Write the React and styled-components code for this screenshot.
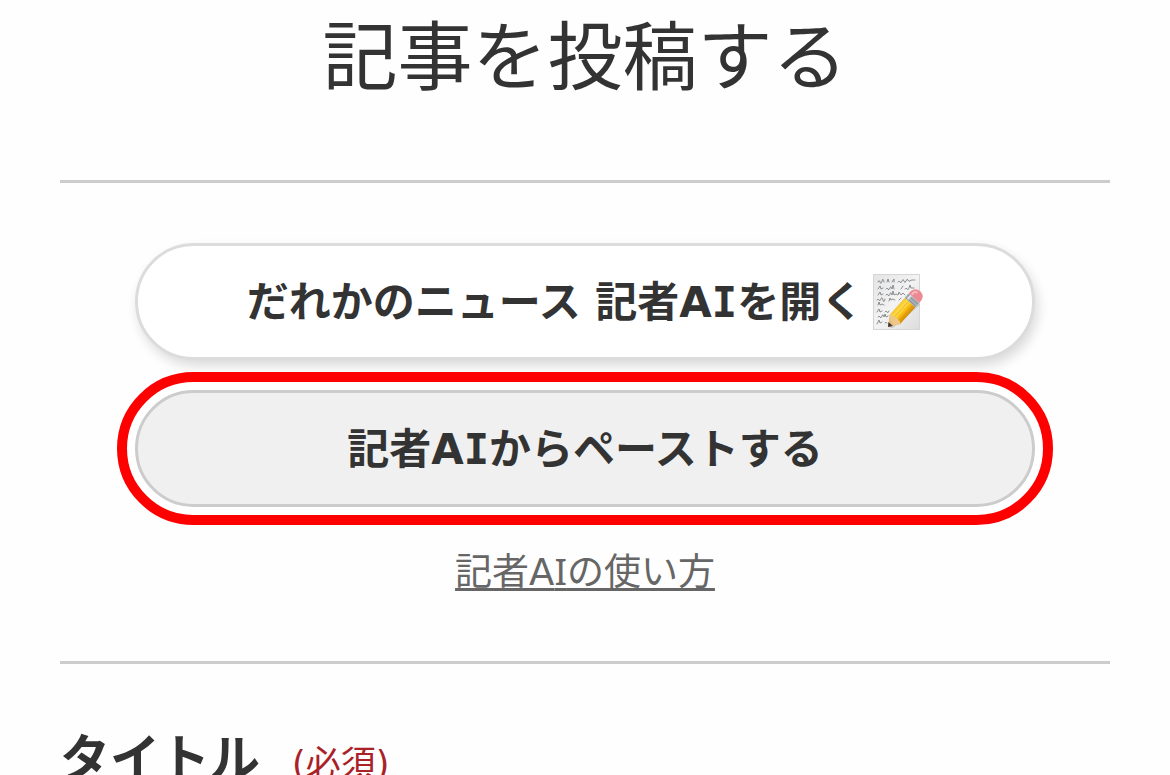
import React from 'react';
import styled, { createGlobalStyle } from 'styled-components';

const colors = {
  text: '#333',
  link: '#666',
  line: '#ccc',
  required: '#a9222a',
  highlight: '#f00',
};

const sizes = {
  title: 75,
  heading: 50,
  button: 42,
  link: 37,
  note: 35,
};

function MemoIcon() {
  return (
    <Memo viewBox="0 0 50 56" aria-hidden="true">
      <defs>
        <linearGradient id="paper" x1="0" y1="0" x2="1" y2="1">
          <stop offset="0" stopColor="#e4e4e4" />
          <stop offset="0.5" stopColor="#f3f3f3" />
          <stop offset="1" stopColor="#dcdcdc" />
        </linearGradient>
        <linearGradient id="barrel" x1="0" y1="0" x2="0" y2="1">
          <stop offset="0" stopColor="#f6c22c" />
          <stop offset="0.35" stopColor="#ffe14d" />
          <stop offset="0.6" stopColor="#f8bd14" />
          <stop offset="1" stopColor="#cf8a08" />
        </linearGradient>
      </defs>
      <rect x="0.5" y="0.5" width="46" height="55" fill="url(#paper)" stroke="#d6d6d6" />
      <g fill="none" stroke="#74777b" strokeWidth="0.8" strokeLinecap="round">
        <path d="M5 8q1-3 2 0t2-1 2 1M14 8l1-3 1 3M19 8l2-3v3M25 8q1-2 2 0t2-1 2 0 2 0 2-1 2 1 2-1 3 0" />
        <path d="M5 15l2-3 1 3 2-1M13 15q1-2 2 0t2-1 2 1l1-4 1 4M28 15l2-3M32 15q1-2 2 0t2-1l1-3 1 3 3 0" />
        <path d="M5 21l2-3 1 3 2-1M13 21q1-2 2 0t2-1 2 1l1-4 1 4 2-1 2 1 1-3 2 3 2-2 2 2M36 21l2-3" />
        <path d="M4 26q1-2 2 0t2-1 2 1 2-1M16 27l1-3 1 2 2-1 2 1M26 26l2-2" />
        <path d="M5 31l1-3 1 3 2-1 2 1M4 38l2-3 1 3 2-1M12 38q1-2 2 0t2-1" />
        <path d="M5 43q1-2 2 0t2-1 2 1l1-3 1 3 2-1M4 50l2-4 1 3 2-1M12 49q1-2 2 0" />
      </g>
      <path d="M16 54L45 28l2 3-27 23z" fill="#777" opacity="0.25" />
      <g transform="translate(15 53) rotate(-48)">
        <path d="M0 0L10-7v14z" fill="#e8bf83" />
        <path d="M0 0l4-3v6z" fill="#3d3932" />
        <path d="M10-7q2 0 2 3 2 0 1 3 2 1 0 4 1 4-3 4L5 3z" fill="#efc887" />
        <path d="M10-7h23v14H10q3-1 2-4 2-2 0-4 1-4-2-6z" fill="url(#barrel)" />
        <path d="M12-2h21M12 4h21" stroke="#d9960b" strokeWidth="0.6" />
        <rect x="33" y="-7" width="6" height="14" fill="#a9b0b6" />
        <path d="M34-7v14M37-7v14" stroke="#7c858d" strokeWidth="0.8" />
        <path d="M34-4h5" stroke="#e3e6e8" strokeWidth="2" />
        <path d="M39-7h3q6 1 6 7t-6 7h-3z" fill="#ec8992" />
        <path d="M40-4h3q2 1 2 3" stroke="#f9b9bd" strokeWidth="2" fill="none" />
      </g>
    </Memo>
  );
}

function App() {
  return (
    <>
      <GlobalStyle />
      <Page>
        <Title>記事を投稿する</Title>
        <Assistant>
          <PillButton type="button">
            <Label>だれかのニュース 記者A<SerifI>I</SerifI>を開く</Label>
            <MemoIcon />
          </PillButton>
          <PillButton type="button" $active>
            <Label>記者A<SerifI>I</SerifI>からペーストする</Label>
          </PillButton>
          <HelpLink href="#help">
            記者A<LightI>I</LightI>の使い方
          </HelpLink>
        </Assistant>
        <FieldHeading>
          タイトル
          <Required>(必須)</Required>
        </FieldHeading>
      </Page>
    </>
  );
}

const GlobalStyle = createGlobalStyle`
  * {
    box-sizing: border-box;
  }
  body {
    margin: 0;
    background-color: #fefefe;
    color: ${colors.text};
    font-family: "DejaVu Sans", "Noto Sans CJK JP", sans-serif;
  }
`;

const Page = styled.main`
  padding: 0 60px;
`;

const Title = styled.h1`
  margin: 0;
  padding: 2px 0 66px;
  font-size: ${sizes.title}px;
  font-weight: 400;
  line-height: 112px;
  text-align: center;
`;

const Assistant = styled.section`
  display: flex;
  flex-direction: column;
  align-items: center;
  padding: 60px 75px;
  border-top: 3px solid ${colors.line};
  border-bottom: 3px solid ${colors.line};
`;

const PillButton = styled.button`
  display: flex;
  align-items: center;
  justify-content: center;
  width: 100%;
  height: 117px;
  padding: 0;
  border: 3px solid ${props => props.$active ? colors.line : '#dcdcdc'};
  border-radius: 59px;
  background-color: ${props => props.$active ? '#f0f0f0' : '#fff'};
  box-shadow: ${props => props.$active ? '0 0 0 9px #fff' : '3px 6px 12px rgba(0, 0, 0, 0.14)'};
  outline: ${props => props.$active ? `10px solid ${colors.highlight}` : 'none'};
  outline-offset: 8px;
  color: inherit;
  font-family: inherit;
  font-size: ${sizes.button}px;
  font-weight: 700;
  cursor: pointer;

  & + & {
    margin-top: 30px;
  }
`;

const Label = styled.span`
  padding-top: 2px;
  line-height: 60px;
  white-space: nowrap;
`;

const SerifI = styled.span`
  font-family: "DejaVu Sans Mono", monospace;
`;

const LightI = styled.span`
  font-family: "Noto Sans", sans-serif;
`;

const Memo = styled.svg`
  width: 50px;
  height: 56px;
  margin-left: 10px;
`;

const HelpLink = styled.a`
  margin-top: 37px;
  padding-bottom: 1px;
  color: ${colors.link};
  font-size: ${sizes.link}px;
  line-height: 54px;
  text-decoration: underline;
  text-decoration-thickness: 3px;
  text-underline-offset: 3px;
  text-decoration-skip-ink: none;
`;

const FieldHeading = styled.h2`
  display: flex;
  align-items: baseline;
  gap: 32px;
  margin: 0;
  padding-top: 58px;
  font-size: ${sizes.heading}px;
  line-height: 75px;
`;

const Required = styled.span`
  color: ${colors.required};
  font-size: ${sizes.note}px;
  font-weight: 400;
`;

export default App;
